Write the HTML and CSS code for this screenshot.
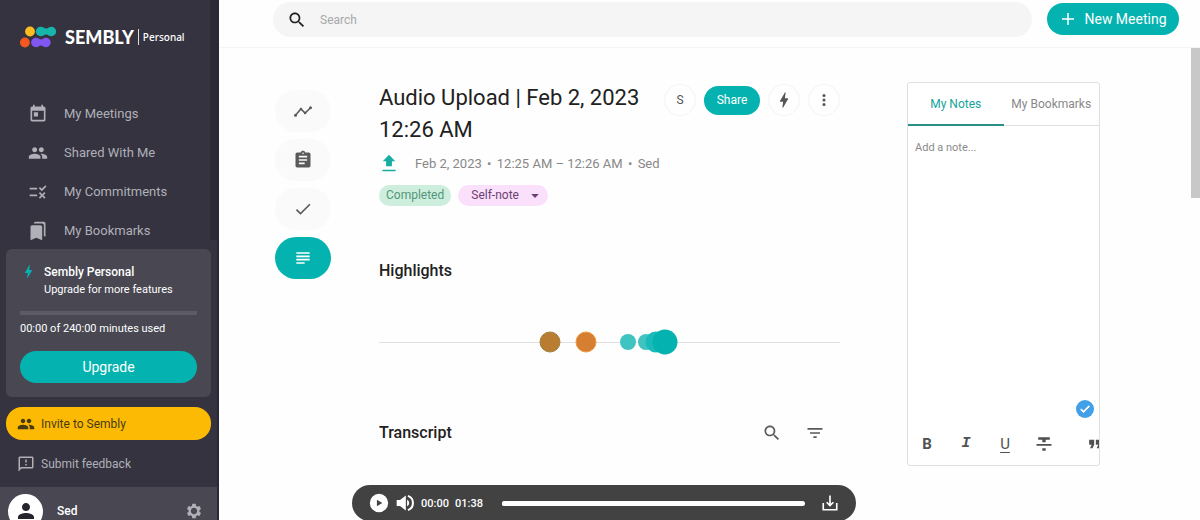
FILE: index.html
```html
<!DOCTYPE html>
<html lang="en">
<head>
  <meta charset="UTF-8" />
  <meta name="viewport" content="width=device-width, initial-scale=1" />
  <title>Sembly - Audio Upload</title>
  <link rel="stylesheet" href="styles.css">
</head>
<body>

  <!-- ICONS -->
  <svg class="sprite" aria-hidden="true">
    <symbol id="i-search" viewBox="0 0 24 24"><path d="M15.5 14h-.79l-.28-.27C15.41 12.59 16 11.11 16 9.5 16 5.91 13.09 3 9.5 3S3 5.91 3 9.5 5.91 16 9.5 16c1.61 0 3.09-.59 4.23-1.57l.27.28v.79l5 4.99L20.49 19l-4.99-5zm-6 0C7.01 14 5 11.99 5 9.5S7.01 5 9.5 5 14 7.01 14 9.5 11.99 14 9.5 14z"/></symbol>
    <symbol id="i-today" viewBox="0 0 24 24"><path d="M19 3h-1V1h-2v2H8V1H6v2H5c-1.11 0-1.99.9-1.99 2L3 19c0 1.1.89 2 2 2h14c1.1 0 2-.9 2-2V5c0-1.1-.9-2-2-2zm0 16H5V8h14v11zM7 10h5v5H7z"/></symbol>
    <symbol id="i-people" viewBox="0 0 24 24"><path d="M16 11c1.66 0 2.99-1.34 2.99-3S17.66 5 16 5c-1.66 0-3 1.34-3 3s1.34 3 3 3zm-8 0c1.66 0 2.99-1.34 2.99-3S9.66 5 8 5C6.34 5 5 6.34 5 8s1.34 3 3 3zm0 2c-2.33 0-7 1.17-7 3.5V19h14v-2.5c0-2.33-4.67-3.5-7-3.5zm8 0c-.29 0-.62.02-.97.05 1.16.84 1.97 1.97 1.97 3.45V19h6v-2.5c0-2.33-4.67-3.5-7-3.5z"/></symbol>
    <symbol id="i-rule" viewBox="0 0 24 24"><path d="M16.54 11L13 7.46l1.41-1.41 2.12 2.12 4.24-4.24 1.41 1.41L16.54 11zM11 7H2v2h9V7zm10 6.41L19.59 12 17 14.59 14.41 12 13 13.41 15.59 16 13 18.59 14.41 20 17 17.41 19.59 20 21 18.59 18.41 16 21 13.41zM11 15H2v2h9v-2z"/></symbol>
    <symbol id="i-bookmarks" viewBox="0 0 24 24"><path d="M19 18l2 1V3c0-1.1-.9-2-2-2H8.99C7.89 1 7 1.9 7 3h10c1.1 0 2 .9 2 2v13zM15 5H5c-1.1 0-2 .9-2 2v16l7-3 7 3V7c0-1.1-.9-2-2-2z"/></symbol>
    <symbol id="i-bolt" viewBox="0 0 24 24"><path d="M11 21h-1l1-7H7.5c-.58 0-.57-.32-.38-.66C8.48 10.94 10.42 7.54 13 3h1l-1 7h3.5c.49 0 .56.33.47.51l-.07.15C12.96 17.55 11 21 11 21z"/></symbol>
    <symbol id="i-feedback" viewBox="0 0 24 24"><path d="M20 2H4c-1.1 0-1.99.9-1.99 2L2 22l4-4h14c1.1 0 2-.9 2-2V4c0-1.1-.9-2-2-2zm0 14H5.17L4 17.17V4h16v12zM11 12h2v2h-2zm0-6h2v4h-2z"/></symbol>
    <symbol id="i-person" viewBox="0 0 24 24"><path d="M12 12c2.21 0 4-1.79 4-4s-1.79-4-4-4-4 1.79-4 4 1.79 4 4 4zm0 2c-2.67 0-8 1.34-8 4v2h16v-2c0-2.66-5.33-4-8-4z"/></symbol>
    <symbol id="i-settings" viewBox="0 0 24 24"><path d="M19.14 12.94c.04-.3.06-.61.06-.94 0-.32-.02-.64-.07-.94l2.03-1.58c.18-.14.23-.41.12-.61l-1.92-3.32c-.12-.22-.37-.29-.59-.22l-2.39.96c-.5-.38-1.03-.7-1.62-.94l-.36-2.54c-.04-.24-.24-.41-.48-.41h-3.84c-.24 0-.43.17-.47.41l-.36 2.54c-.59.24-1.13.57-1.62.94l-2.39-.96c-.22-.08-.47 0-.59.22L2.74 8.87c-.12.21-.08.47.12.61l2.03 1.58c-.05.3-.09.63-.09.94s.02.64.07.94l-2.03 1.58c-.18.14-.23.41-.12.61l1.92 3.32c.12.22.37.29.59.22l2.39-.96c.5.38 1.03.7 1.62.94l.36 2.54c.05.24.24.41.48.41h3.84c.24 0 .44-.17.47-.41l.36-2.54c.59-.24 1.13-.56 1.62-.94l2.39.96c.22.08.47 0 .59-.22l1.92-3.32c.12-.22.07-.47-.12-.61l-2.01-1.58zM12 16.2c-2.3 0-4.2-1.9-4.2-4.2s1.9-4.2 4.2-4.2 4.2 1.9 4.2 4.2-1.9 4.2-4.2 4.2z"/></symbol>
    <symbol id="i-plus" viewBox="0 0 24 24"><path d="M20 13h-7v7h-2v-7H4v-2h7V4h2v7h7z"/></symbol>
    <symbol id="i-timeline" viewBox="0 0 24 24"><path d="M3 17l6.500-7.500 5 5L21 8" fill="none" stroke="currentColor" stroke-width="1.800"/><circle cx="3" cy="17" r="1.800"/><circle cx="9.500" cy="9.500" r="1.500"/><circle cx="14.500" cy="14.500" r="1.500"/><circle cx="21" cy="8" r="1.800"/></symbol>
    <symbol id="i-assignment" viewBox="0 0 24 24"><path d="M19 3h-4.180C14.400 1.840 13.300 1 12 1c-1.300 0-2.400.84-2.820 2H5c-1.100 0-2 .9-2 2v14c0 1.100.9 2 2 2h14c1.100 0 2-.9 2-2V5c0-1.100-.9-2-2-2zm-7 0c.55 0 1 .45 1 1s-.45 1-1 1-1-.45-1-1 .45-1 1-1zm2 14H7v-2h7v2zm3-4H7v-2h10v2zm0-4H7V7h10v2z"/></symbol>
    <symbol id="i-check" viewBox="0 0 24 24"><path d="M9 16.170L4.830 12l-1.420 1.410L9 19 21 7l-1.410-1.410z"/></symbol>
    <symbol id="i-subject" viewBox="0 0 24 24"><path d="M14 17H4v2h10v-2zm6-8H4v2h16V9zM4 15h16v-2H4v2zM4 5v2h16V5H4z"/></symbol>
    <symbol id="i-more" viewBox="0 0 24 24"><circle cx="12" cy="6" r="2"/><circle cx="12" cy="12" r="2"/><circle cx="12" cy="18" r="2"/></symbol>
    <symbol id="i-upload" viewBox="0 0 24 24"><path d="M8.500 16h7v-6H19.500L12 2l-7.500 8h4zM4 20h16v2H4z"/></symbol>
    <symbol id="i-arrow" viewBox="0 0 24 24"><path d="M3 7l9 10 9-10z"/></symbol>
    <symbol id="i-filter" viewBox="0 0 24 24"><path d="M10 18h4v-2h-4v2zM3 6v2h18V6H3zm3 7h12v-2H6v2z"/></symbol>
    <symbol id="i-play" viewBox="0 0 24 24"><path fill-rule="evenodd" d="M12 1a11 11 0 1 0 0 22 11 11 0 0 0 0-22zM9.500 8v8l6.500-4z"/></symbol>
    <symbol id="i-volume" viewBox="0 0 24 24"><path d="M2 8.500v7h4l7 5.500V3L6 8.500zM14.500 8v8c1.500-.7 2.500-2.200 2.500-4s-1-3.300-2.500-4z"/><path d="M15.500 3.500a9 9 0 0 1 0 17" fill="none" stroke="currentColor" stroke-width="2.400"/></symbol>
    <symbol id="i-download" viewBox="0 0 24 24"><path d="M3 12v9h18v-9M12 2v13M7.500 11l4.500 4.500 4.500-4.500" fill="none" stroke="currentColor" stroke-width="2.200"/></symbol>
    <symbol id="i-strike" viewBox="0 0 24 24"><path d="M5 4v3h5v3h4V7h5V4zM3 14h18v-2H3zM10 20h4v-3h-4z"/></symbol>
    <symbol id="i-quote" viewBox="0 0 24 24"><path d="M6 17h3l2-4V7H5v6h3zm8 0h3l2-4V7h-6v6h3z"/></symbol>
  </svg>

  <div class="app">

    <aside class="sidebar">
      <div class="sidebar-top">
        <a class="logo" href="#">
          <svg class="logo-mark" viewBox="0 0 36 22" aria-hidden="true">
            <circle cx="10" cy="5.500" r="4.900" fill="#fcbd22"/>
            <path d="M20.500.8c2.700 0 3.500 1.700 5.700 1.700S29 .8 31.400.8a4.600 4.600 0 0 1 0 9.400c-2.400 0-3-1.800-5.200-1.800s-3 1.800-5.700 1.800a4.700 4.700 0 0 1 0-9.400z" fill="#16b5ac"/>
            <circle cx="4.900" cy="16.500" r="4.900" fill="#f4581f"/>
            <path d="M15.800 11.800c2.500 0 3.200 1.700 5.200 1.700s2.600-1.700 5-1.700a4.600 4.600 0 0 1 0 9.400c-2.400 0-3-1.800-5-1.800s-2.700 1.800-5.200 1.800a4.700 4.700 0 0 1 0-9.400z" fill="#8156f2"/>
          </svg>
          <span class="logo-name">SEMBLY</span>
          <span class="logo-plan">Personal</span>
        </a>

        <nav class="nav">
          <a class="nav-item" href="#"><svg class="icon"><use href="#i-today"/></svg>My Meetings</a>
          <a class="nav-item" href="#"><svg class="icon"><use href="#i-people"/></svg>Shared With Me</a>
          <a class="nav-item" href="#"><svg class="icon"><use href="#i-rule"/></svg>My Commitments</a>
          <a class="nav-item" href="#"><svg class="icon"><use href="#i-bookmarks"/></svg>My Bookmarks</a>
        </nav>
      </div>

      <div class="plan">
        <div class="plan-head">
          <svg class="icon icon-bolt"><use href="#i-bolt"/></svg>
          <div>
            <div class="plan-title">Sembly Personal</div>
            <div class="plan-text">Upgrade for more features</div>
          </div>
        </div>
        <progress class="plan-bar" value="0" max="240" aria-label="Minutes used"></progress>
        <div class="plan-text">00:00 of 240:00 minutes used</div>
        <button class="btn btn-upgrade">Upgrade</button>
      </div>

      <button class="invite"><svg class="icon icon-small"><use href="#i-people"/></svg>Invite to Sembly</button>
      <a class="feedback" href="#"><svg class="icon icon-small"><use href="#i-feedback"/></svg>Submit feedback</a>

      <div class="profile">
        <span class="avatar"><svg class="icon icon-large"><use href="#i-person"/></svg></span>
        <span class="profile-name">Sed</span>
        <button class="icon-btn" aria-label="Settings"><svg class="icon icon-small"><use href="#i-settings"/></svg></button>
      </div>
    </aside>

    <div class="main">
      <header class="topbar">
        <label class="search">
          <svg class="icon"><use href="#i-search"/></svg>
          <input type="search" placeholder="Search" aria-label="Search">
        </label>
        <button class="btn btn-new"><svg class="icon icon-small"><use href="#i-plus"/></svg>New Meeting</button>
      </header>

      <main class="content">
        <div class="rail">
          <button class="rail-btn" aria-label="Insights"><svg class="icon"><use href="#i-timeline"/></svg></button>
          <button class="rail-btn" aria-label="Minutes"><svg class="icon"><use href="#i-assignment"/></svg></button>
          <button class="rail-btn" aria-label="Tasks"><svg class="icon"><use href="#i-check"/></svg></button>
          <button class="rail-btn active" aria-label="Transcript"><svg class="icon"><use href="#i-subject"/></svg></button>
        </div>

        <article class="meeting">
          <div class="meeting-head">
            <h1>Audio Upload | Feb 2, 2023 12:26 AM</h1>
            <div class="actions">
              <button class="round-btn">S</button>
              <button class="btn btn-share">Share</button>
              <button class="round-btn" aria-label="Automations"><svg class="icon"><use href="#i-bolt"/></svg></button>
              <button class="round-btn" aria-label="More"><svg class="icon icon-small"><use href="#i-more"/></svg></button>
            </div>
          </div>

          <div class="meta">
            <svg class="icon"><use href="#i-upload"/></svg>
            <span>Feb 2, 2023</span>
            <span class="dot">•</span>
            <span>12:25 AM – 12:26 AM</span>
            <span class="dot">•</span>
            <span>Sed</span>
          </div>

          <div class="chips">
            <span class="chip">Completed</span>
            <span class="chip-select">
              <select aria-label="Meeting type">
                <option>Self-note</option>
              </select>
              <svg class="icon"><use href="#i-arrow"/></svg>
            </span>
          </div>

          <h2>Highlights</h2>
          <div class="highlights">
            <span class="mark brown" style="left: 37%"></span>
            <span class="mark orange" style="left: 45%"></span>
            <span class="mark light" style="left: 54%"></span>
            <span class="mark light" style="left: 58%"></span>
            <span class="mark mid" style="left: 60%"></span>
            <span class="mark teal" style="left: 62%"></span>
          </div>

          <div class="transcript-head">
            <h2>Transcript</h2>
            <button class="icon-btn" aria-label="Search transcript"><svg class="icon"><use href="#i-search"/></svg></button>
            <button class="icon-btn" aria-label="Filter"><svg class="icon"><use href="#i-filter"/></svg></button>
          </div>

          <div class="player">
            <button class="icon-btn" aria-label="Play"><svg class="icon"><use href="#i-play"/></svg></button>
            <button class="icon-btn" aria-label="Volume"><svg class="icon"><use href="#i-volume"/></svg></button>
            <span class="time">00:00</span>
            <span class="time">01:38</span>
            <input type="range" min="0" max="98" value="0" aria-label="Position">
            <button class="icon-btn" aria-label="Download"><svg class="icon icon-small"><use href="#i-download"/></svg></button>
          </div>
        </article>

        <section class="notes">
          <div class="tabs">
            <button class="tab active">My Notes</button>
            <button class="tab">My Bookmarks</button>
          </div>
          <div class="note-box">
            <textarea placeholder="Add a note..." aria-label="Note"></textarea>
            <span class="saved"><svg class="icon"><use href="#i-check"/></svg></span>
          </div>
          <div class="toolbar">
            <button class="tool bold" aria-label="Bold">B</button>
            <button class="tool italic" aria-label="Italic">I</button>
            <button class="tool underline" aria-label="Underline">U</button>
            <button class="tool" aria-label="Strikethrough"><svg class="icon"><use href="#i-strike"/></svg></button>
            <button class="tool quote" aria-label="Quote"><svg class="icon"><use href="#i-quote"/></svg></button>
          </div>
        </section>

        <div class="scrollbar"></div>
      </main>
    </div>
  </div>

</body>
</html>
```
FILE: styles.css
```css
* {
  box-sizing: border-box;
}

body {
  margin: 0;
  font-family: Roboto, sans-serif;
  font-size: 13px;
  color: #212121;
  background: #fefefe;
}

button,
input,
select,
textarea {
  font: inherit;
  color: inherit;
  border: none;
  background: none;
  padding: 0;
  margin: 0;
  outline: none;
}

button {
  cursor: pointer;
}

a {
  color: inherit;
  text-decoration: none;
}

.sprite {
  display: none;
}

.icon {
  width: 20px;
  height: 20px;
  flex: none;
  fill: currentColor;
}

.icon-small {
  width: 18px;
  height: 18px;
}

.icon-large {
  width: 24px;
  height: 24px;
}

.icon-btn {
  display: flex;
}

.btn {
  display: flex;
  align-items: center;
  justify-content: center;
  font-size: 14px;
  color: white;
  background: #04b3b0;
  border-radius: 16px;
  height: 32px;
}

.app {
  display: flex;
  height: 100vh;
  overflow: hidden;
}

/* Sidebar */
.sidebar {
  width: 219px;
  flex: none;
  background: #34333f;
  border-right: 2px solid #2a2933;
  color: #b0b0b8;
}

.sidebar-top {
  height: 240px;
  padding-top: 24px;
  border-right: 7px solid #2b2a35;
}

.logo {
  display: flex;
  align-items: center;
  height: 26px;
  padding-left: 20px;
  color: white;
}

.logo-mark {
  width: 36px;
  height: 22px;
}

.logo-name {
  font-family: Lato, sans-serif;
  font-weight: 900;
  font-size: 18px;
  margin-left: 9px;
}

.logo-plan {
  font-family: "Noto Sans", sans-serif;
  font-weight: 500;
  font-size: 10px;
  line-height: 16px;
  margin-left: 4px;
  padding-left: 4px;
  border-left: 1px solid #dddddd;
}

.nav {
  padding-top: 44px;
}

.nav-item {
  display: flex;
  align-items: center;
  gap: 16px;
  height: 39px;
  padding-left: 28px;
}

.plan {
  margin: 9px 6px 10px;
  padding: 14px;
  height: 148px;
  background: #484752;
  border-radius: 6px;
  color: white;
}

.plan-head {
  display: flex;
  gap: 7px;
}

.icon-bolt {
  width: 17px;
  height: 17px;
  color: #04b3b0;
}

.plan-title {
  font-size: 12px;
  font-weight: 500;
  line-height: 18px;
}

.plan-text {
  font-size: 11px;
  line-height: 18px;
}

.plan-bar {
  display: block;
  appearance: none;
  width: 100%;
  height: 4px;
  border: none;
  margin: 12px 0 5px;
  background: #5c5b66;
}

.plan-bar::-webkit-progress-bar {
  background: #5c5b66;
}

.btn-upgrade {
  width: 100%;
  margin-top: 13px;
}

.invite {
  display: flex;
  align-items: center;
  gap: 6px;
  width: 205px;
  height: 33px;
  margin: 0 6px;
  padding-left: 11px;
  font-size: 12px;
  border-radius: 16px;
  color: #473a14;
  background: #fdba04;
}

.feedback {
  display: flex;
  align-items: center;
  gap: 6px;
  height: 47px;
  padding-left: 17px;
  font-size: 12px;
}

.profile {
  display: flex;
  align-items: center;
  height: 48px;
  padding: 0 14px 0 8px;
  background: #484752;
}

.avatar {
  display: flex;
  align-items: center;
  justify-content: center;
  width: 35px;
  height: 35px;
  border-radius: 50%;
  background: white;
  color: #26252d;
}

.profile-name {
  flex: 1;
  margin-left: 14px;
  font-size: 12px;
  font-weight: 500;
  color: white;
}

/* Top bar */
.main {
  flex: 1;
  min-width: 0;
}

.topbar {
  display: flex;
  align-items: flex-start;
  gap: 15px;
  height: 48px;
  padding: 2px 21px 0 54px;
  border-bottom: 1px solid #f5f5f5;
}

.search {
  flex: 1;
  display: flex;
  align-items: center;
  gap: 13px;
  height: 35px;
  padding-left: 14px;
  border-radius: 18px;
  background: #f5f5f5;
}

.search input {
  flex: 1;
  font-size: 12px;
}

.search input::placeholder {
  color: #a8a8a8;
}

.btn-new {
  width: 132px;
  gap: 7px;
  margin-top: 1px;
}

/* Meeting */
.content {
  display: flex;
  align-items: flex-start;
  padding-left: 56px;
}

.rail {
  display: flex;
  flex-direction: column;
  gap: 7px;
  width: 56px;
  margin: 42px 48px 0 0;
}

.rail-btn {
  display: flex;
  align-items: center;
  justify-content: center;
  height: 42px;
  border-radius: 21px;
  color: #5a5a5a;
  background: #fafafa;
}

.rail-btn.active {
  color: white;
  background: #04b3b0;
}

.meeting {
  flex: 1;
  min-width: 0;
  padding-top: 34px;
}

.meeting-head {
  display: flex;
  align-items: flex-start;
  justify-content: space-between;
}

h1 {
  flex: 1;
  margin: 0;
  font-size: 22px;
  font-weight: 400;
  line-height: 32px;
}

h2 {
  margin: 0;
  font-size: 16px;
  font-weight: 500;
  line-height: 20px;
}

.actions {
  display: flex;
  align-items: center;
  gap: 8px;
  padding-top: 2px;
}

.round-btn {
  display: flex;
  align-items: center;
  justify-content: center;
  width: 32px;
  height: 32px;
  font-size: 12px;
  color: #555555;
  border: 1px solid #f5f5f5;
  border-radius: 50%;
}

.btn-share {
  width: 56px;
  height: 29px;
  font-size: 12px;
}

.meta {
  display: flex;
  align-items: center;
  height: 34px;
  color: #888888;
}

.meta .icon {
  margin-right: 16px;
  color: #16ada2;
}

.dot {
  width: 15px;
  text-align: center;
}

.chips {
  display: flex;
  gap: 7px;
  margin: 5px 0 55px;
  font-size: 12px;
  line-height: 21px;
}

.chip {
  padding: 0 7px;
  border-radius: 11px;
  color: #54957a;
  background: #cdeedd;
}

.chip-select {
  display: flex;
  align-items: center;
  padding-right: 8px;
  border-radius: 11px;
  color: #6b3f72;
  background: #fbe0fb;
}

.chip-select select {
  appearance: none;
  width: 72px;
  padding-left: 13px;
}

.chip-select .icon {
  width: 10px;
  height: 10px;
}

/* Highlights line */
.highlights {
  position: relative;
  height: 1px;
  margin: 61px 0 80px;
  background: #e0e0e0;
}

.mark {
  position: absolute;
  width: 21px;
  height: 21px;
  border-radius: 50%;
  transform: translate(-50%, -50%);
}

.brown {
  background: #b97d32;
  border: 1px solid #a0803c;
}

.orange {
  background: #d67f32;
  border: 1px solid #ee9a3c;
}

.light {
  width: 16px;
  height: 16px;
  background: #3fc4c2;
}

.mid {
  background: #1ababa;
}

.teal {
  width: 25px;
  height: 25px;
  background: #04b3b0;
}

.transcript-head {
  display: flex;
  align-items: center;
  gap: 23px;
  padding-right: 15px;
  color: #5a5a5a;
}

.transcript-head h2 {
  flex: 1;
  color: #212121;
}

.player {
  display: flex;
  align-items: center;
  height: 36px;
  margin: 42px -16px 0 -27px;
  padding: 0 17px;
  gap: 6px;
  font-size: 11px;
  font-weight: 500;
  color: white;
  background: #424242;
  border-radius: 18px;
}

.time {
  width: 28px;
}

.player input {
  appearance: none;
  flex: 1;
  height: 5px;
  margin: 0 10px 0 13px;
  border-radius: 3px;
  background: white;
}

.player input::-webkit-slider-thumb {
  appearance: none;
  width: 5px;
  height: 5px;
  border-radius: 50%;
  background: white;
}

/* Notes */
.notes {
  width: 193px;
  flex: none;
  margin: 34px 91px 0 67px;
  border: 1px solid #e0e0e0;
  border-radius: 3px;
  overflow: hidden;
  background: white;
}

.tabs {
  display: flex;
  height: 43px;
}

.tab {
  flex: 1;
  font-size: 12px;
  white-space: nowrap;
  color: #888888;
  border-bottom: 1px solid #e0e0e0;
}

.tab.active {
  color: #16a39c;
  border-bottom: 2px solid #2a8f89;
}

.note-box {
  position: relative;
}

.note-box textarea {
  display: block;
  width: 100%;
  height: 294px;
  padding: 15px 7px;
  font-size: 11px;
  resize: none;
}

.note-box textarea::placeholder {
  color: #8a8a8a;
}

.saved {
  position: absolute;
  right: 5px;
  bottom: 2px;
  display: flex;
  align-items: center;
  justify-content: center;
  width: 18px;
  height: 18px;
  border-radius: 50%;
  color: white;
  background: #41a0e8;
}

.saved .icon {
  width: 12px;
  height: 12px;
  stroke: white;
  stroke-width: 2;
}

.toolbar {
  display: flex;
  gap: 15px;
  height: 45px;
  padding: 2px 0 0 7px;
  color: #505050;
}

.tool {
  display: flex;
  align-items: center;
  justify-content: center;
  flex: none;
  width: 24px;
  font-size: 15px;
}

.bold {
  font-weight: 700;
}

.italic {
  font-family: "Liberation Mono", monospace;
  font-weight: 700;
  font-style: italic;
}

.underline {
  text-decoration: underline;
  text-underline-offset: 3px;
}

.quote {
  margin-left: 12px;
}

.scrollbar {
  width: 9px;
  height: 150px;
  flex: none;
  background: #c8c8c8;
}
```
